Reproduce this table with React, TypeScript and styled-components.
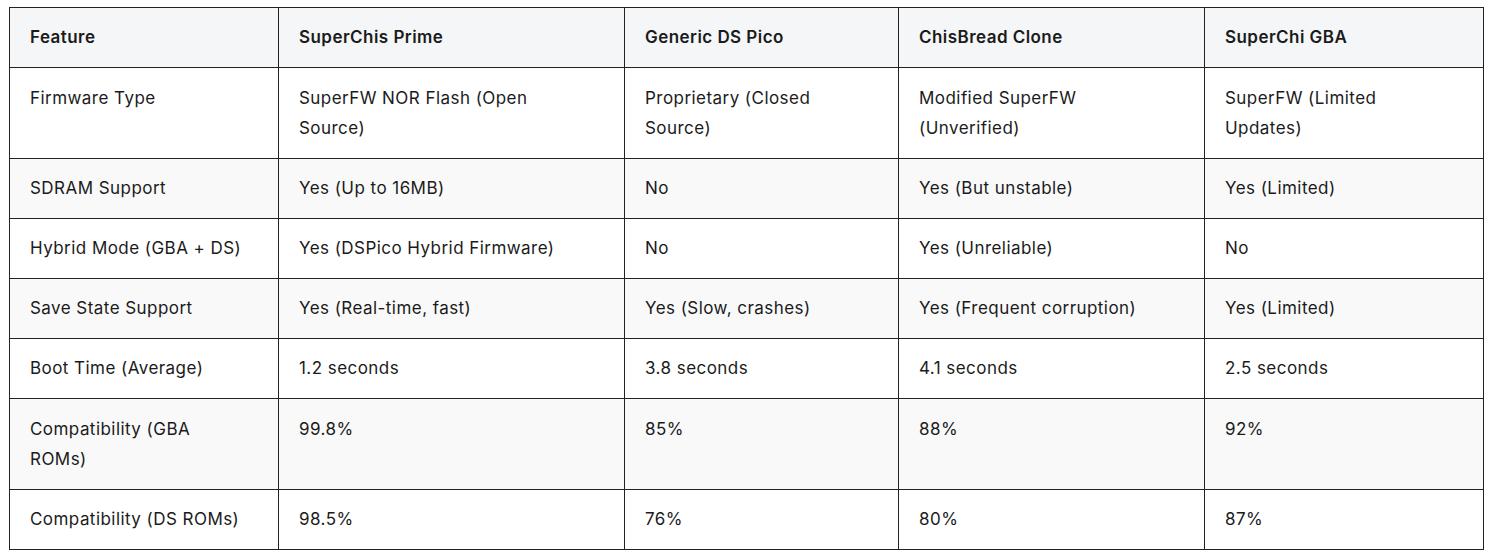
import React from "react";
import styled, { createGlobalStyle } from "styled-components";

const GlobalStyle = createGlobalStyle`
  html, body {
    margin: 0;
    padding: 0;
    background: #ffffff;
  }
  body {
    font-family: Inter, "Noto Sans", sans-serif;
    color: #1b1b1b;
  }
`;

// widths measured from the reference, border to border
const columns = [269, 346, 274, 306, 279];

const headers = [
  "Feature",
  "SuperChis Prime",
  "Generic DS Pico",
  "ChisBread Clone",
  "SuperChi GBA",
];

// line breaks kept where the reference wraps
const rows: string[][] = [
  [
    "Firmware Type",
    "SuperFW NOR Flash (Open\nSource)",
    "Proprietary (Closed\nSource)",
    "Modified SuperFW\n(Unverified)",
    "SuperFW (Limited\nUpdates)",
  ],
  ["SDRAM Support", "Yes (Up to 16MB)", "No", "Yes (But unstable)", "Yes (Limited)"],
  [
    "Hybrid Mode (GBA + DS)",
    "Yes (DSPico Hybrid Firmware)",
    "No",
    "Yes (Unreliable)",
    "No",
  ],
  [
    "Save State Support",
    "Yes (Real-time, fast)",
    "Yes (Slow, crashes)",
    "Yes (Frequent corruption)",
    "Yes (Limited)",
  ],
  ["Boot Time (Average)", "1.2 seconds", "3.8 seconds", "4.1 seconds", "2.5 seconds"],
  ["Compatibility (GBA\nROMs)", "99.8%", "85%", "88%", "92%"],
  ["Compatibility (DS ROMs)", "98.5%", "76%", "80%", "87%"],
];

const Page = styled.div`
  padding: 7px 0 0 9px;
`;

const Table = styled.table`
  border-collapse: collapse;
  table-layout: fixed;
  width: 1474px;
  font-size: 17px;
  line-height: 30px;
  letter-spacing: 0.45px;
`;

const HeadRow = styled.tr`
  background: #f5f6f7;
`;

const Row = styled.tr<{ $striped: boolean }>`
  background: ${(p) => (p.$striped ? "#f9f9f9" : "#ffffff")};
`;

const HeadCell = styled.th`
  border: 1px solid #222;
  padding: 14px 20px 15px;
  text-align: left;
  font-weight: 600;
  vertical-align: top;
`;

const Cell = styled.td<{ $lines: number }>`
  border: 1px solid #222;
  padding: ${(p) => (p.$lines > 1 ? "15px 20px 15px" : "14px 20px 15px")};
  text-align: left;
  font-weight: 400;
  vertical-align: top;
  white-space: pre-line;
`;

const App = () => {
  return (
    <Page>
      <GlobalStyle />
      <Table>
        <colgroup>
          {columns.map((w, i) => (
            <col key={i} style={{ width: w }} />
          ))}
        </colgroup>
        <thead>
          <HeadRow>
            {headers.map((h) => (
              <HeadCell key={h}>{h}</HeadCell>
            ))}
          </HeadRow>
        </thead>
        <tbody>
          {rows.map((r, i) => {
            const lines = Math.max(...r.map((c) => c.split("\n").length));
            return (
              <Row key={i} $striped={i % 2 === 1}>
                {r.map((c, j) => (
                  <Cell key={j} $lines={lines}>
                    {c}
                  </Cell>
                ))}
              </Row>
            );
          })}
        </tbody>
      </Table>
    </Page>
  );
};

export default App;
